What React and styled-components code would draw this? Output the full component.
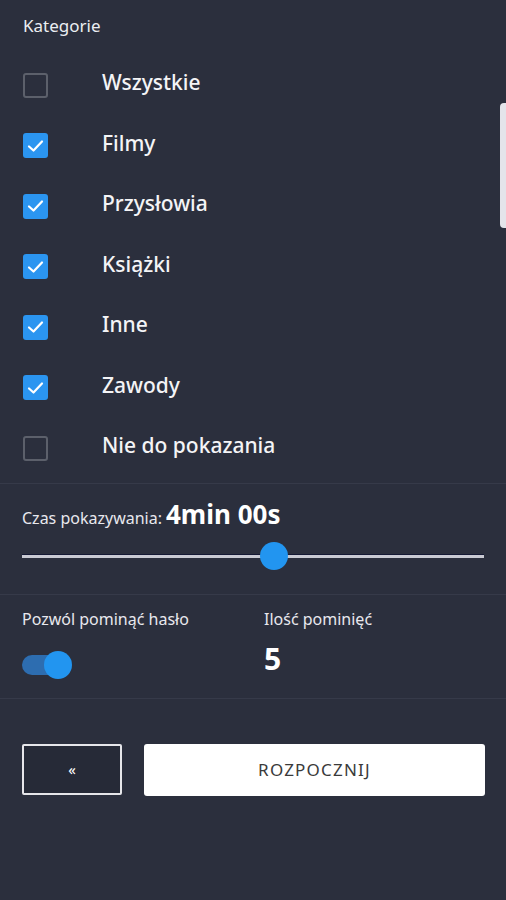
import React, { useState } from 'react'
import styled, { createGlobalStyle } from 'styled-components'

const Global = createGlobalStyle`
  html, body {
    margin: 0;
    padding: 0;
    background: #2b2f3d;
  }
  body {
    font-family: "Noto Sans", "Open Sans", sans-serif;
    color: #f2f2f2;
  }
`

const Page = styled.div`
  position: relative;
  width: 506px;
  height: 900px;
  background: #2b2f3d;
  overflow: hidden;
`

const ScrollThumb = styled.div`
  position: absolute;
  right: -4px;
  top: 103px;
  width: 10px;
  height: 125px;
  border-radius: 4px;
  background: #e4e4ea;
`

const Title = styled.div`
  padding: 14px 23px 0;
  font-size: 17px;
  line-height: 24px;
  color: #eceef2;
`

const List = styled.div`
  display: flex;
  flex-direction: column;
  padding: 17px 0 4px 23px;
`

const Row = styled.label`
  display: flex;
  align-items: center;
  height: 60.5px;
`

const Box = styled.span`
  box-sizing: border-box;
  width: 25px;
  height: 25px;
  border-radius: 3px;
  display: flex;
  align-items: center;
  justify-content: center;
  background: ${p => (p.checked ? '#2b95f0' : 'transparent')};
  border: ${p => (p.checked ? 'none' : '2px solid #5c606b')};
`

const Label = styled.span`
  margin-left: 54px;
  margin-top: -6px;
  font-size: 21px;
  font-weight: 500;
  color: #f4f4f6;
`

const Divider = styled.div`
  height: 1px;
  background: #363a49;
`

const TimeSection = styled.div`
  padding: 15px 22px 24px;
`

const TimeLine = styled.div`
  display: flex;
  align-items: baseline;
  gap: 4px;
  height: 30px;
  line-height: 30px;
  font-size: 16px;
  color: #e8e8ee;
`

const TimeValue = styled.span`
  font-size: 26px;
  font-weight: 700;
  color: #fff;
`

const Slider = styled.div`
  position: relative;
  margin-top: 13px;
  height: 28px;
  display: flex;
  align-items: center;
`

const Track = styled.div`
  width: 100%;
  height: 3px;
  background: #c9cad3;
  border-top: 1px solid #141833;
`

const Thumb = styled.div`
  position: absolute;
  top: 0;
  width: 28px;
  height: 28px;
  border-radius: 50%;
  background: #2295f0;
  transform: translateX(-50%);
`

const Options = styled.div`
  display: flex;
  padding: 13px 22px 18px;
`

const Col = styled.div`
  display: flex;
  flex-direction: column;
  width: ${p => p.width || 'auto'};
  flex: ${p => (p.width ? 'none' : '1')};
`

const SmallLabel = styled.div`
  font-size: 16px;
  color: #e8e8ee;
  line-height: 22px;
`

const Switch = styled.div`
  position: relative;
  margin-top: 20px;
  width: 50px;
  height: 30px;
  display: flex;
  align-items: center;
`

const SwitchTrack = styled.div`
  width: 46px;
  height: 20px;
  border-radius: 10px;
  background: #2d6db0;
`

const SwitchKnob = styled.div`
  position: absolute;
  right: 0;
  top: 1px;
  width: 28px;
  height: 28px;
  border-radius: 50%;
  background: #2295f0;
`

const Count = styled.div`
  margin-top: 9px;
  font-size: 30px;
  font-weight: 700;
  color: #fff;
  line-height: 40px;
`

const Buttons = styled.div`
  display: flex;
  gap: 22px;
  padding: 45px 21px 0 22px;
`

const BackButton = styled.button`
  box-sizing: border-box;
  width: 100px;
  height: 51px;
  border: 2px solid #e6e6ea;
  border-radius: 2px;
  background: #262a37;
  color: #fff;
  font-family: inherit;
  font-size: 15px;
`

const StartButton = styled.button`
  flex: 1;
  height: 52px;
  border: none;
  border-radius: 3px;
  background: #fff;
  color: #3a3a3a;
  font-family: inherit;
  font-size: 17px;
  letter-spacing: 1.2px;
`

const categories = [
  ['Wszystkie', false],
  ['Filmy', true],
  ['Przysłowia', true],
  ['Książki', true],
  ['Inne', true],
  ['Zawody', true],
  ['Nie do pokazania', false],
]

const Check = () => (
  <svg width="17" height="14" viewBox="0 0 17 14">
    <path d="M2 7.5 L6.5 11.5 L15 2.5" fill="none" stroke="#fff" strokeWidth="2.2" strokeLinecap="round" strokeLinejoin="round" />
  </svg>
)

const App = () => {
  const [items] = useState(categories)
  return (
    <Page>
      <Global />
      <ScrollThumb />
      <Title>Kategorie</Title>
      <List>
        {items.map(([name, on]) => (
          <Row key={name}>
            <Box checked={on}>{on && <Check />}</Box>
            <Label>{name}</Label>
          </Row>
        ))}
      </List>
      <Divider />
      <TimeSection>
        <TimeLine>
          Czas pokazywania: <TimeValue>4min 00s</TimeValue>
        </TimeLine>
        <Slider>
          <Track />
          <Thumb style={{ left: `${(274 - 22) / 462 * 100}%` }} />
        </Slider>
      </TimeSection>
      <Divider />
      <Options>
        <Col width="242px">
          <SmallLabel>Pozwól pominąć hasło</SmallLabel>
          <Switch>
            <SwitchTrack />
            <SwitchKnob />
          </Switch>
        </Col>
        <Col>
          <SmallLabel>Ilość pominięć</SmallLabel>
          <Count>5</Count>
        </Col>
      </Options>
      <Divider />
      <Buttons>
        <BackButton>«</BackButton>
        <StartButton>ROZPOCZNIJ</StartButton>
      </Buttons>
    </Page>
  )
}

export default App
